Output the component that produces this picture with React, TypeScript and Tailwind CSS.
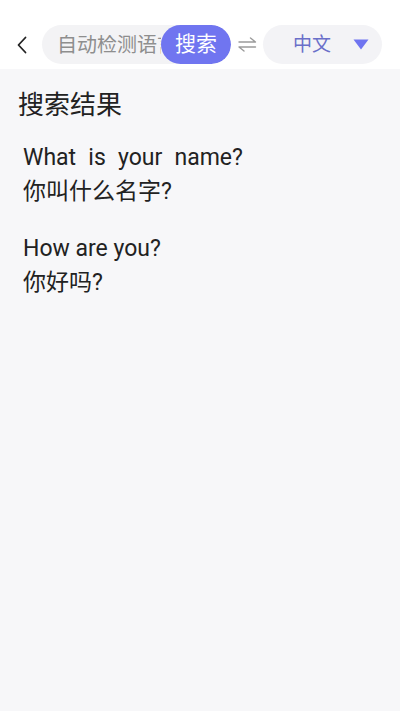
import React from "react";

const font = { fontFamily: '"Roboto", "Noto Sans CJK SC", sans-serif' };

export default function App() {
  return (
    <div
      className="w-[400px] h-[711px] flex flex-col bg-[#f7f7f9] text-[#222]"
      style={font}
    >
      <div className="h-[69px] bg-white flex items-center pt-[20px] shrink-0">
        <div className="w-[42px] flex items-center justify-center pl-[2px]">
          <svg width="12" height="18" viewBox="0 0 12 18" fill="none">
            <path d="M9.5 1.5 L2.5 9 L9.5 16.5" stroke="#222" strokeWidth="1.8" strokeLinecap="round" strokeLinejoin="round" />
          </svg>
        </div>
        <div className="w-[189px] h-[39px] rounded-full bg-[#f3f3f5] flex items-center overflow-hidden">
          <div className="flex-1 pl-[15px] text-[20px] text-[#8e8e8e] whitespace-nowrap overflow-hidden leading-none">
            自动检测语言
          </div>
          <div className="w-[70px] h-[39px] rounded-full bg-[#7075f0] text-white text-[21px] flex items-center justify-center shrink-0 leading-none">
            搜索
          </div>
        </div>
        <div className="w-[32px] flex items-center justify-center">
          <svg width="19" height="15" viewBox="0 0 19 15" fill="none">
            <path d="M1 5 H17.5 L12.5 1" stroke="#9a9a9a" strokeWidth="1.4" strokeLinecap="round" strokeLinejoin="round" />
            <path d="M17.5 10 H1 L6 14" stroke="#9a9a9a" strokeWidth="1.4" strokeLinecap="round" strokeLinejoin="round" />
          </svg>
        </div>
        <div className="w-[119px] h-[39px] rounded-full bg-[#f3f3f6] flex items-center">
          <div className="flex-1 flex justify-center pl-[8px] text-[19px] text-[#6a6fc9] leading-none">
            中文
          </div>
          <svg className="mr-[13px]" width="16" height="11" viewBox="0 0 16 11">
            <path d="M0.5 0.5 H15.5 L8 10.5 Z" fill="#6f74f0" />
          </svg>
        </div>
      </div>
      <div className="px-[18px] pt-[20px]">
        <div className="text-[26px] leading-[32px] text-[#222]">搜索结果</div>
        <div className="pl-[5px] pt-[20px] text-[23px] leading-[34px] text-[#222]">
          <div>
            <div className="[word-spacing:6.5px]">What is your name?</div>
            <div>你叫什么名字?</div>
          </div>
          <div className="mt-[23px]">
            <div>How are you?</div>
            <div>你好吗?</div>
          </div>
        </div>
      </div>
    </div>
  );
}
